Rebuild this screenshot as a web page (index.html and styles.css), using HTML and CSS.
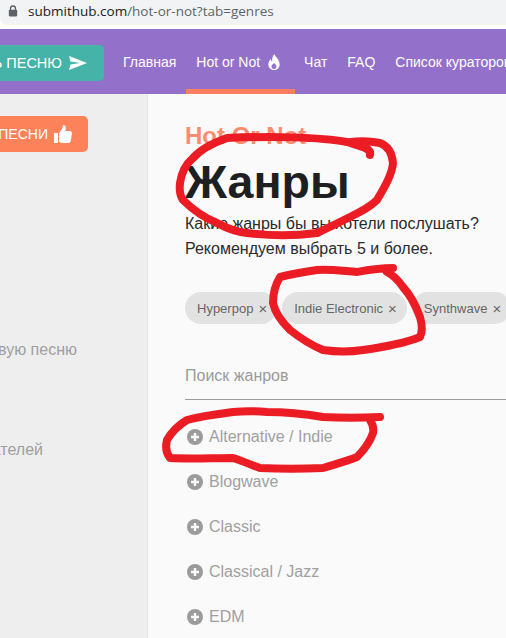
FILE: index.html
```html
<!DOCTYPE html>
<html lang="ru">
<head>
<meta charset="utf-8">
<title>Hot or Not</title>
<link rel="stylesheet" href="styles.css">
</head>
<body>
<div class="page">
  <div class="addressbar">
    <svg class="lock" viewBox="0 0 12 14"><path d="M3 6V4a3 3 0 0 1 6 0v2" fill="none" stroke="#5f6368" stroke-width="1.6"/><rect x="1" y="5.5" width="10" height="8" rx="1" fill="#5f6368"/></svg>
    <span class="url"><span class="host">submithub.com</span>/hot-or-not?tab=genres</span>
  </div>
  <header class="nav">
    <a class="send-btn">ОТПРАВИТЬ ПЕСНЮ
      <svg class="plane" viewBox="0 0 18 14"><path d="M0 0l18 7-18 7 1.5-5.5L11 7 1.500 5.500z" fill="#fff"/></svg>
    </a>
    <nav class="links">
      <a class="link">Главная</a>
      <a class="link active">Hot or Not
        <svg class="fire" viewBox="0 0 14 18"><path fill-rule="evenodd" d="M7.500 0c.6 3.200 5.500 5.400 5.500 11a6 6 0 0 1-12 0c0-2.600 1.200-4.400 2.700-5.800.1 1.400.6 2.400 1.500 3C4.500 5 5.700 2 7.500 0zM7 9.500c-1.400 1.300-2.600 2.500-2.600 3.900a2.600 2.600 0 0 0 5.200 0c0-1.400-1.200-2.600-2.600-3.900z" fill="#fff"/></svg>
      </a>
      <a class="link">Чат</a>
      <a class="link">FAQ</a>
      <a class="link">Список кураторов</a>
    </nav>
  </header>
  <div class="body">
    <aside class="side">
      <a class="rate-btn">ОЦЕНИТЬ ПЕСНИ
        <svg class="thumb" viewBox="0 0 18 18"><path d="M0 8h4v10H0zM5 8l3-4c.8-1.200.6-2.400 1-4 2 0 3 1.500 2.800 3.500L11.300 6H16c1.300 0 2.200 1.100 2 2.300l-1.200 7.500c-.2 1.300-1.100 2.200-2.300 2.200H8c-1.500 0-2-1-3-1z" fill="#fff"/></svg>
      </a>
      <p class="side-item first">Отправить новую песню</p>
      <p class="side-item second">Список слушателей</p>
    </aside>
    <main class="main">
      <div class="eyebrow">Hot Or Not</div>
      <h1 class="title">Жанры</h1>
      <p class="lead">Какие жанры бы вы хотели послушать?<br>Рекомендуем выбрать 5 и более.</p>
      <div class="chips">
        <span class="chip">Hyperpop <i class="x">×</i></span>
        <span class="chip">Indie Electronic <i class="x">×</i></span>
        <span class="chip">Synthwave <i class="x">×</i></span>
      </div>
      <input class="search" placeholder="Поиск жанров">
      <ul class="genres">
        <li class="genre"><svg class="plus" viewBox="0 0 16 16"><circle cx="8" cy="8" r="8" fill="#9b9b9b"/><path d="M8 4v8M4 8h8" stroke="#fafafa" stroke-width="2.400"/></svg>Alternative / Indie</li>
        <li class="genre"><svg class="plus" viewBox="0 0 16 16"><circle cx="8" cy="8" r="8" fill="#9b9b9b"/><path d="M8 4v8M4 8h8" stroke="#fafafa" stroke-width="2.400"/></svg>Blogwave</li>
        <li class="genre"><svg class="plus" viewBox="0 0 16 16"><circle cx="8" cy="8" r="8" fill="#9b9b9b"/><path d="M8 4v8M4 8h8" stroke="#fafafa" stroke-width="2.400"/></svg>Classic</li>
        <li class="genre"><svg class="plus" viewBox="0 0 16 16"><circle cx="8" cy="8" r="8" fill="#9b9b9b"/><path d="M8 4v8M4 8h8" stroke="#fafafa" stroke-width="2.400"/></svg>Classical / Jazz</li>
        <li class="genre"><svg class="plus" viewBox="0 0 16 16"><circle cx="8" cy="8" r="8" fill="#9b9b9b"/><path d="M8 4v8M4 8h8" stroke="#fafafa" stroke-width="2.400"/></svg>EDM</li>
      </ul>
    </main>
  </div>
  <svg class="scribbles" viewBox="0 0 506 638">
    <path d="M370 155C372 148 360 146 347 142C320 137 270 136 227 138C210 144 200 150 193 158C185 165 181 175 180 183C179 192 180 196 183 200C195 212 205 218 217 223C228 229 237 232 247 233C270 236 295 236 317 233C330 227 340 222 350 217C362 211 370 207 377 200C384 188 392 175 393 163C392 152 388 146 380 143C370 141 360 141 350 142"/>
    <path d="M393 268C378 268 368 270 357 272C343 271 330 269 317 270C304 272 292 274 280 277C275 285 273 294 273 303C275 313 282 322 290 330C300 338 311 345 323 350C337 352 350 352 363 350C385 347 405 343 420 337C423 331 422 324 420 317C416 306 411 296 403 287C398 280 393 275 387 272"/>
    <path d="M380 417C360 418 342 418 323 417C305 414 285 412 267 412C255 411 244 411 233 412C217 414 202 416 187 420C177 426 171 433 167 440C165 448 166 453 170 458C190 459 212 458 233 458C243 461 251 465 260 468C280 469 302 469 323 468C336 464 347 461 357 457C364 450 370 442 373 433C374 428 372 423 370 420"/>
  </svg>
</div>
</body>
</html>
```

FILE: styles.css
```css
* { box-sizing: border-box; }
html, body { margin: 0; padding: 0; }
body { font-family: "Liberation Sans", Arial, sans-serif; }
.page { position: relative; width: 506px; height: 638px; overflow: hidden; background: #fff; }

.addressbar { height: 25px; background: #f1f3f4; border-bottom-left-radius: 8px; display: flex; align-items: center; padding: 0 0 3px 8px; gap: 10px; margin-bottom: 4px; }
.lock { width: 10px; height: 12px; }
.url { font-family: "Open Sans", sans-serif; font-size: 13.5px; color: #5f6368; white-space: nowrap; }
.host { color: #202124; }

.nav { height: 65px; background: #9370c9; display: flex; align-items: center; overflow: hidden; }
.send-btn { flex: none; display: flex; align-items: center; justify-content: flex-end; gap: 7px; width: 104px; height: 36px; margin-top: 3px; background: #46b3a8; border-radius: 0 5px 5px 0; color: #fff; font-size: 14.5px; white-space: nowrap; padding-right: 17px; overflow: hidden; }
.plane { flex: none; width: 18px; height: 14px; }
.links { display: flex; align-self: stretch; margin-left: 9px; }
.link { display: flex; align-items: center; gap: 7px; padding: 0 10px; color: #fff; font-size: 14px; white-space: nowrap; }
.link.active { border-bottom: 5px solid #fb7f5f; border-top: 5px solid transparent; padding-right: 14px; margin-right: -1px; }
.fire { width: 14px; height: 17px; margin-top: 2px; }

.body { display: flex; height: 549px; }
.side { flex: none; width: 148px; background: #eeeeee; border-right: 1px solid #e3e3e3; display: flex; flex-direction: column; align-items: flex-end; overflow: hidden; }
.rate-btn { flex: none; display: flex; align-items: center; gap: 6px; height: 36px; margin: 22px 59px 0 0; padding: 0 16px 0 12px; background: #fe8259; border-radius: 5px; color: #fff; font-size: 14px; white-space: nowrap; }
.thumb { width: 18px; height: 18px; }
.side-item { margin: 0; font-size: 16px; color: #9f9f9f; white-space: nowrap; }
.side-item.first { margin: 189px 70px 0 0; }
.side-item.second { margin: 82px 104px 0 0; }

.main { flex: 1; min-width: 0; background: #fafafa; padding: 29px 0 0 37px; overflow: hidden; }
.eyebrow { font-size: 24px; font-weight: 700; color: #fb8d6e; line-height: 26px; }
.title { margin: 5px 0 0; font-size: 46.5px; line-height: 56px; font-weight: 700; color: #1d1f22; }
.lead { margin: 1px 0 0; font-size: 16px; line-height: 25px; color: #2b2b2b; }
.chips { display: flex; gap: 5px; margin-top: 31px; white-space: nowrap; }
.chip { flex: none; height: 32px; display: flex; align-items: center; gap: 5px; padding: 0 10px 0 12px; background: #e2e2e2; border-radius: 16px; font-size: 13px; color: #666; }
.x { font-style: normal; font-size: 15px; }
.search { display: block; width: 100%; height: 48px; margin-top: 28px; padding: 0; background: transparent; border: 0; border-bottom: 1px solid #9a9a9a; font-family: inherit; font-size: 16px; outline: none; }
.search::placeholder { color: #9a9a9a; opacity: 1; }
.genres { list-style: none; margin: 14px 0 0; padding: 0 0 0 2px; }
.genre { height: 45px; display: flex; align-items: center; gap: 6px; font-size: 16px; color: #a0a0a0; }
.plus { flex: none; width: 16px; height: 16px; }

.scribbles { position: absolute; left: 0; top: 0; width: 506px; height: 638px; fill: none; stroke: #ec1c24; stroke-width: 8; stroke-linecap: round; stroke-linejoin: round; pointer-events: none; }
```
